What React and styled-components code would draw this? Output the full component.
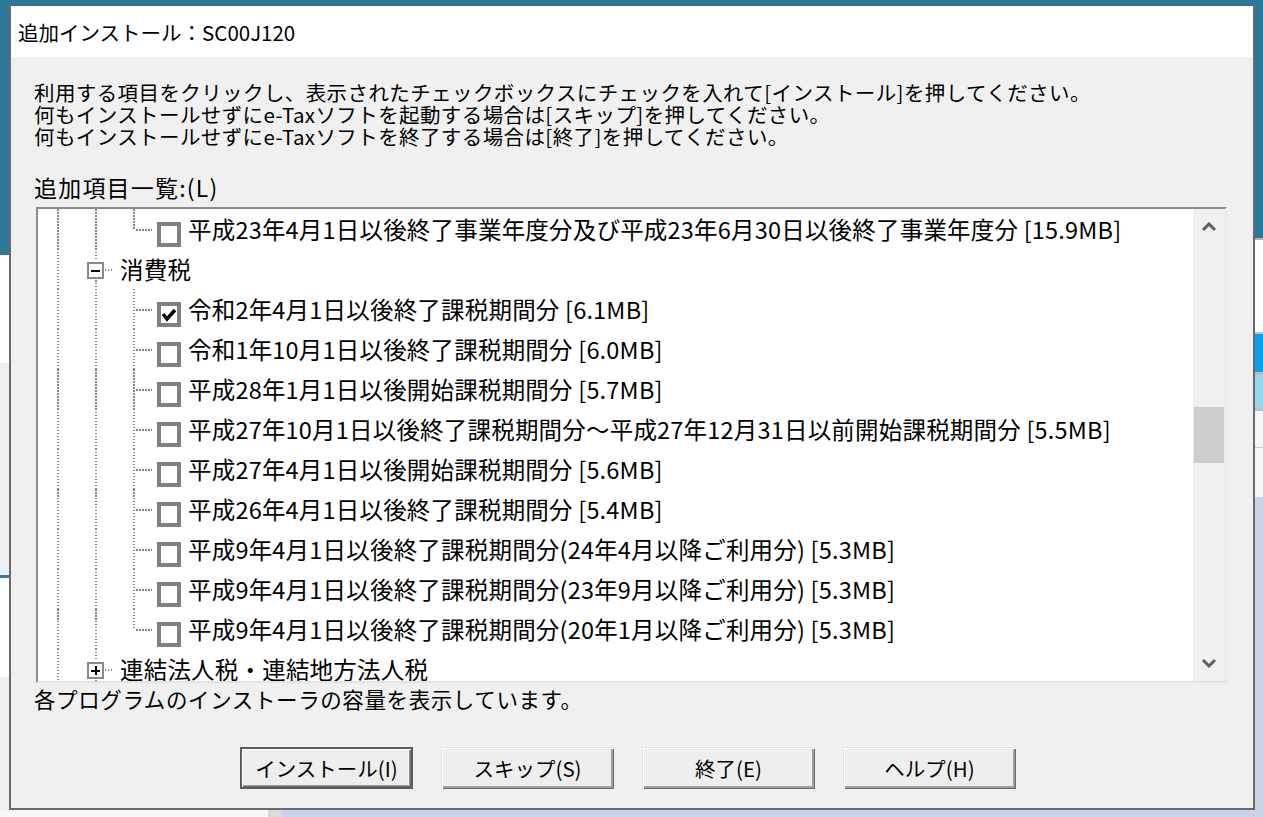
import React from 'react'
import styled, { createGlobalStyle, css } from 'styled-components'

const GlobalStyle = createGlobalStyle`
  html, body {
    margin: 0;
    padding: 0;
  }
  body {
    font-family: "Noto Sans CJK JP", "Noto Sans", sans-serif;
    color: #000;
    background: #2c7898;
  }
`

const dotsV = 'repeating-linear-gradient(to bottom, #858585 0 1.5px, transparent 1.5px 3px)'
const dotsH = 'repeating-linear-gradient(to right, #858585 0 1.5px, transparent 1.5px 3px)'

const Desktop = styled.div`
  width: 1263px;
  height: 817px;
  display: grid;
  grid-template-columns: 9px 1246px 8px;
  grid-template-rows: 5px 805px 7px;
  overflow: hidden;
`

const TopBand = styled.div`
  grid-column: 1 / -1;
  background: #2c7898;
`

const LeftStrip = styled.div`
  background: linear-gradient(
    to bottom,
    #2c7898 0 250px,
    #ffffff 250px 358px,
    #eef0f4 358px 570px,
    #3a78a8 570px 573px,
    #ffffff 573px 672px,
    #f0f0f0 672px
  );
`

const RightStrip = styled.div`
  background: linear-gradient(
    to bottom,
    #2c7898 0 233px,
    #b0b0b0 233px 235px,
    #ffffff 235px 327px,
    #c0c0c0 327px 329px,
    #0a9fe6 329px 367px,
    #bbbbbb 367px 370px,
    #97d7ec 370px 403px,
    #c0c0c0 403px 406px,
    #f6f6f6 406px 442px,
    #cccccc 442px 443px,
    #f6f6f6 443px 492px,
    #c9d3e4 492px
  );
`

const BottomBand = styled.div`
  grid-column: 1 / -1;
  background: linear-gradient(
    to right,
    #f7f7f7 0 268px,
    #dadada 268px 282px,
    #c9d3e4 282px
  );
`

const Window = styled.div`
  display: flex;
  flex-direction: column;
  box-sizing: border-box;
  border: 2px solid #6a6a6a;
  border-top: 1px solid #2f6d88;
  background: #f0f0f0;
`

const TitleBar = styled.div`
  height: 51px;
  flex: none;
  display: flex;
  align-items: center;
  padding-left: 7px;
  background: #fff;
  font-size: 20.5px;
`

const Body = styled.div`
  flex: 1;
  display: flex;
  flex-direction: column;
  padding: 24px 26px 0 23px;
`

const Message = styled.p`
  margin: 0;
  font-size: 20.5px;
  line-height: 22px;
  letter-spacing: 0.4px;
  white-space: nowrap;
`

const ListLabel = styled.div`
  margin-top: 29px;
  font-size: 23px;
  line-height: 22px;
  letter-spacing: 1.2px;
`

const TreeBox = styled.div`
  margin: 9px 0 0 2px;
  height: 476px;
  box-sizing: border-box;
  display: flex;
  background: #fff;
  border: 2px solid;
  border-color: #8a8a8a #ececec #e3e3e3 #8a8a8a;
`

const Tree = styled.div`
  flex: 1;
  overflow: hidden;
  display: flex;
  flex-direction: column;
`

const Row = styled.div`
  height: 40px;
  flex: none;
  display: flex;
  align-items: center;
`

const Guide = styled.div`
  position: relative;
  width: 38px;
  height: 100%;
  flex: none;

  &::before {
    content: '';
    display: ${p => (p.$kind === 'blank' ? 'none' : 'block')};
    position: absolute;
    left: 19px;
    top: 0;
    width: 2px;
    height: ${p => (p.$kind === 'end' ? '21px' : '100%')};
    background: ${dotsV};
  }

  &::after {
    content: '';
    display: ${p => (p.$kind === 'tee' || p.$kind === 'end' ? 'block' : 'none')};
    position: absolute;
    left: 22px;
    right: 0;
    top: 20px;
    height: 2px;
    background: ${dotsH};
  }
`

const Knot = styled.div`
  position: relative;
  width: 38px;
  height: 100%;
  flex: none;
  box-sizing: border-box;
  display: flex;
  align-items: flex-start;
  padding: 13px 0 0 11px;

  &::before {
    content: '';
    position: absolute;
    left: 19px;
    top: 0;
    width: 2px;
    height: 12px;
    background: ${dotsV};
  }

  &::after {
    content: '';
    display: ${p => (p.$below ? 'block' : 'none')};
    position: absolute;
    left: 19px;
    top: 31px;
    bottom: 0;
    width: 2px;
    background: ${dotsV};
  }
`

const ExpandBox = styled.span`
  width: 17px;
  height: 17px;
  flex: none;
  box-sizing: border-box;
  border: 2px solid #8a8a8a;
  background: #fff;
  position: relative;

  &::before {
    content: '';
    position: absolute;
    left: 2px;
    top: 5.5px;
    width: 9px;
    height: 2px;
    background: #000;
  }

  ${p =>
    p.$plus &&
    css`
      &::after {
        content: '';
        position: absolute;
        left: 5.5px;
        top: 2px;
        width: 2px;
        height: 9px;
        background: #000;
      }
    `}
`

const Connector = styled.span`
  flex: 1;
  height: 2px;
  margin-top: 7px;
  margin-left: 1px;
  background: ${dotsH};
`

const CheckBox = styled.span`
  width: 24px;
  height: 25px;
  flex: none;
  align-self: flex-start;
  margin: 13px 0 0 5px;
  box-sizing: border-box;
  border: 4px solid #808080;
  background: #fff;
  display: flex;
  align-items: center;
  justify-content: center;
`

const ItemText = styled.span`
  margin-left: ${p => (p.$node ? '6px' : '7px')};
  font-size: 23.5px;
  line-height: 40px;
  letter-spacing: 0.2px;
  white-space: nowrap;
`

const ScrollBar = styled.div`
  width: 32px;
  flex: none;
  display: flex;
  flex-direction: column;
  background: #f0f0f0;
`

const ArrowButton = styled.div`
  height: 36px;
  flex: none;
  display: flex;
  align-items: center;
  justify-content: center;
`

const Track = styled.div`
  flex: 1;
  display: flex;
  flex-direction: column;
`

const Thumb = styled.div`
  height: 56px;
  margin: 162px 1px 0 1px;
  background: #cdcdcd;
`

const Status = styled.div`
  margin-top: 5px;
  font-size: 21.5px;
  line-height: 22px;
  letter-spacing: 0.6px;
  white-space: nowrap;
`

const ButtonRow = styled.div`
  margin-top: 37px;
  display: flex;
  gap: 28px;
  padding-left: 206px;
`

const Button = styled.button`
  width: 173px;
  height: 42px;
  padding: 0;
  font-family: "Noto Sans CJK JP", "Noto Sans", sans-serif;
  font-size: 20.5px;
  color: #000;
  background: #eeeeee;
  border: none;
  box-shadow: inset 1px 1px #e3e3e3, inset 2px 2px #fff, inset -1px -1px #696969,
    inset -3px -3px #a0a0a0;

  ${p =>
    p.$primary &&
    css`
      box-shadow: inset 0 0 0 2px #5c5c5c, inset 3px 3px #fff, inset -3px -3px #696969,
        inset -4px -4px #a0a0a0;
    `}
`

const Chevron = ({ down }) => (
  <svg width="16" height="10" viewBox="0 0 16 10">
    <polyline
      points={down ? '2,2 8,8 14,2' : '2,8 8,2 14,8'}
      fill="none"
      stroke="#606060"
      strokeWidth="3"
    />
  </svg>
)

const Tick = () => (
  <svg width="16" height="17" viewBox="0 0 16 17">
    <polyline points="2,8 6,13 14,4" fill="none" stroke="#000" strokeWidth="3.5" />
  </svg>
)

const rows = [
  { guides: ['line', 'line', 'end'], label: '平成23年4月1日以後終了事業年度分及び平成23年6月30日以後終了事業年度分 [15.9MB]' },
  { guides: ['line'], node: 'minus', label: '消費税' },
  { guides: ['line', 'line', 'tee'], checked: true, label: '令和2年4月1日以後終了課税期間分 [6.1MB]' },
  { guides: ['line', 'line', 'tee'], label: '令和1年10月1日以後終了課税期間分 [6.0MB]' },
  { guides: ['line', 'line', 'tee'], label: '平成28年1月1日以後開始課税期間分 [5.7MB]' },
  { guides: ['line', 'line', 'tee'], label: '平成27年10月1日以後終了課税期間分～平成27年12月31日以前開始課税期間分 [5.5MB]' },
  { guides: ['line', 'line', 'tee'], label: '平成27年4月1日以後開始課税期間分 [5.6MB]' },
  { guides: ['line', 'line', 'tee'], label: '平成26年4月1日以後終了課税期間分 [5.4MB]' },
  { guides: ['line', 'line', 'tee'], label: '平成9年4月1日以後終了課税期間分(24年4月以降ご利用分) [5.3MB]' },
  { guides: ['line', 'line', 'tee'], label: '平成9年4月1日以後終了課税期間分(23年9月以降ご利用分) [5.3MB]' },
  { guides: ['line', 'line', 'end'], label: '平成9年4月1日以後終了課税期間分(20年1月以降ご利用分) [5.3MB]' },
  { guides: ['line'], node: 'plus', label: '連結法人税・連結地方法人税' },
]

const TreeRow = ({ row }) => (
  <Row>
    {row.guides.map((g, i) => (
      <Guide key={i} $kind={g} />
    ))}
    {row.node ? (
      <>
        <Knot $below>
          <ExpandBox $plus={row.node === 'plus'} />
          <Connector />
        </Knot>
        <ItemText $node>{row.label}</ItemText>
      </>
    ) : (
      <>
        <CheckBox>{row.checked && <Tick />}</CheckBox>
        <ItemText>{row.label}</ItemText>
      </>
    )}
  </Row>
)

const App = () => {
  return (
    <Desktop>
      <GlobalStyle />
      <TopBand />
      <LeftStrip />
      <Window>
        <TitleBar>追加インストール：SC00J120</TitleBar>
        <Body>
          <Message>
            利用する項目をクリックし、表示されたチェックボックスにチェックを入れて[インストール]を押してください。
            <br />
            何もインストールせずにe-Taxソフトを起動する場合は[スキップ]を押してください。
            <br />
            何もインストールせずにe-Taxソフトを終了する場合は[終了]を押してください。
          </Message>
          <ListLabel>追加項目一覧:(L)</ListLabel>
          <TreeBox>
            <Tree>
              {rows.map((row, i) => (
                <TreeRow key={i} row={row} />
              ))}
            </Tree>
            <ScrollBar>
              <ArrowButton>
                <Chevron />
              </ArrowButton>
              <Track>
                <Thumb />
              </Track>
              <ArrowButton>
                <Chevron down />
              </ArrowButton>
            </ScrollBar>
          </TreeBox>
          <Status>各プログラムのインストーラの容量を表示しています。</Status>
          <ButtonRow>
            <Button $primary>インストール(I)</Button>
            <Button>スキップ(S)</Button>
            <Button>終了(E)</Button>
            <Button>ヘルプ(H)</Button>
          </ButtonRow>
        </Body>
      </Window>
      <RightStrip />
      <BottomBand />
    </Desktop>
  )
}

export default App
